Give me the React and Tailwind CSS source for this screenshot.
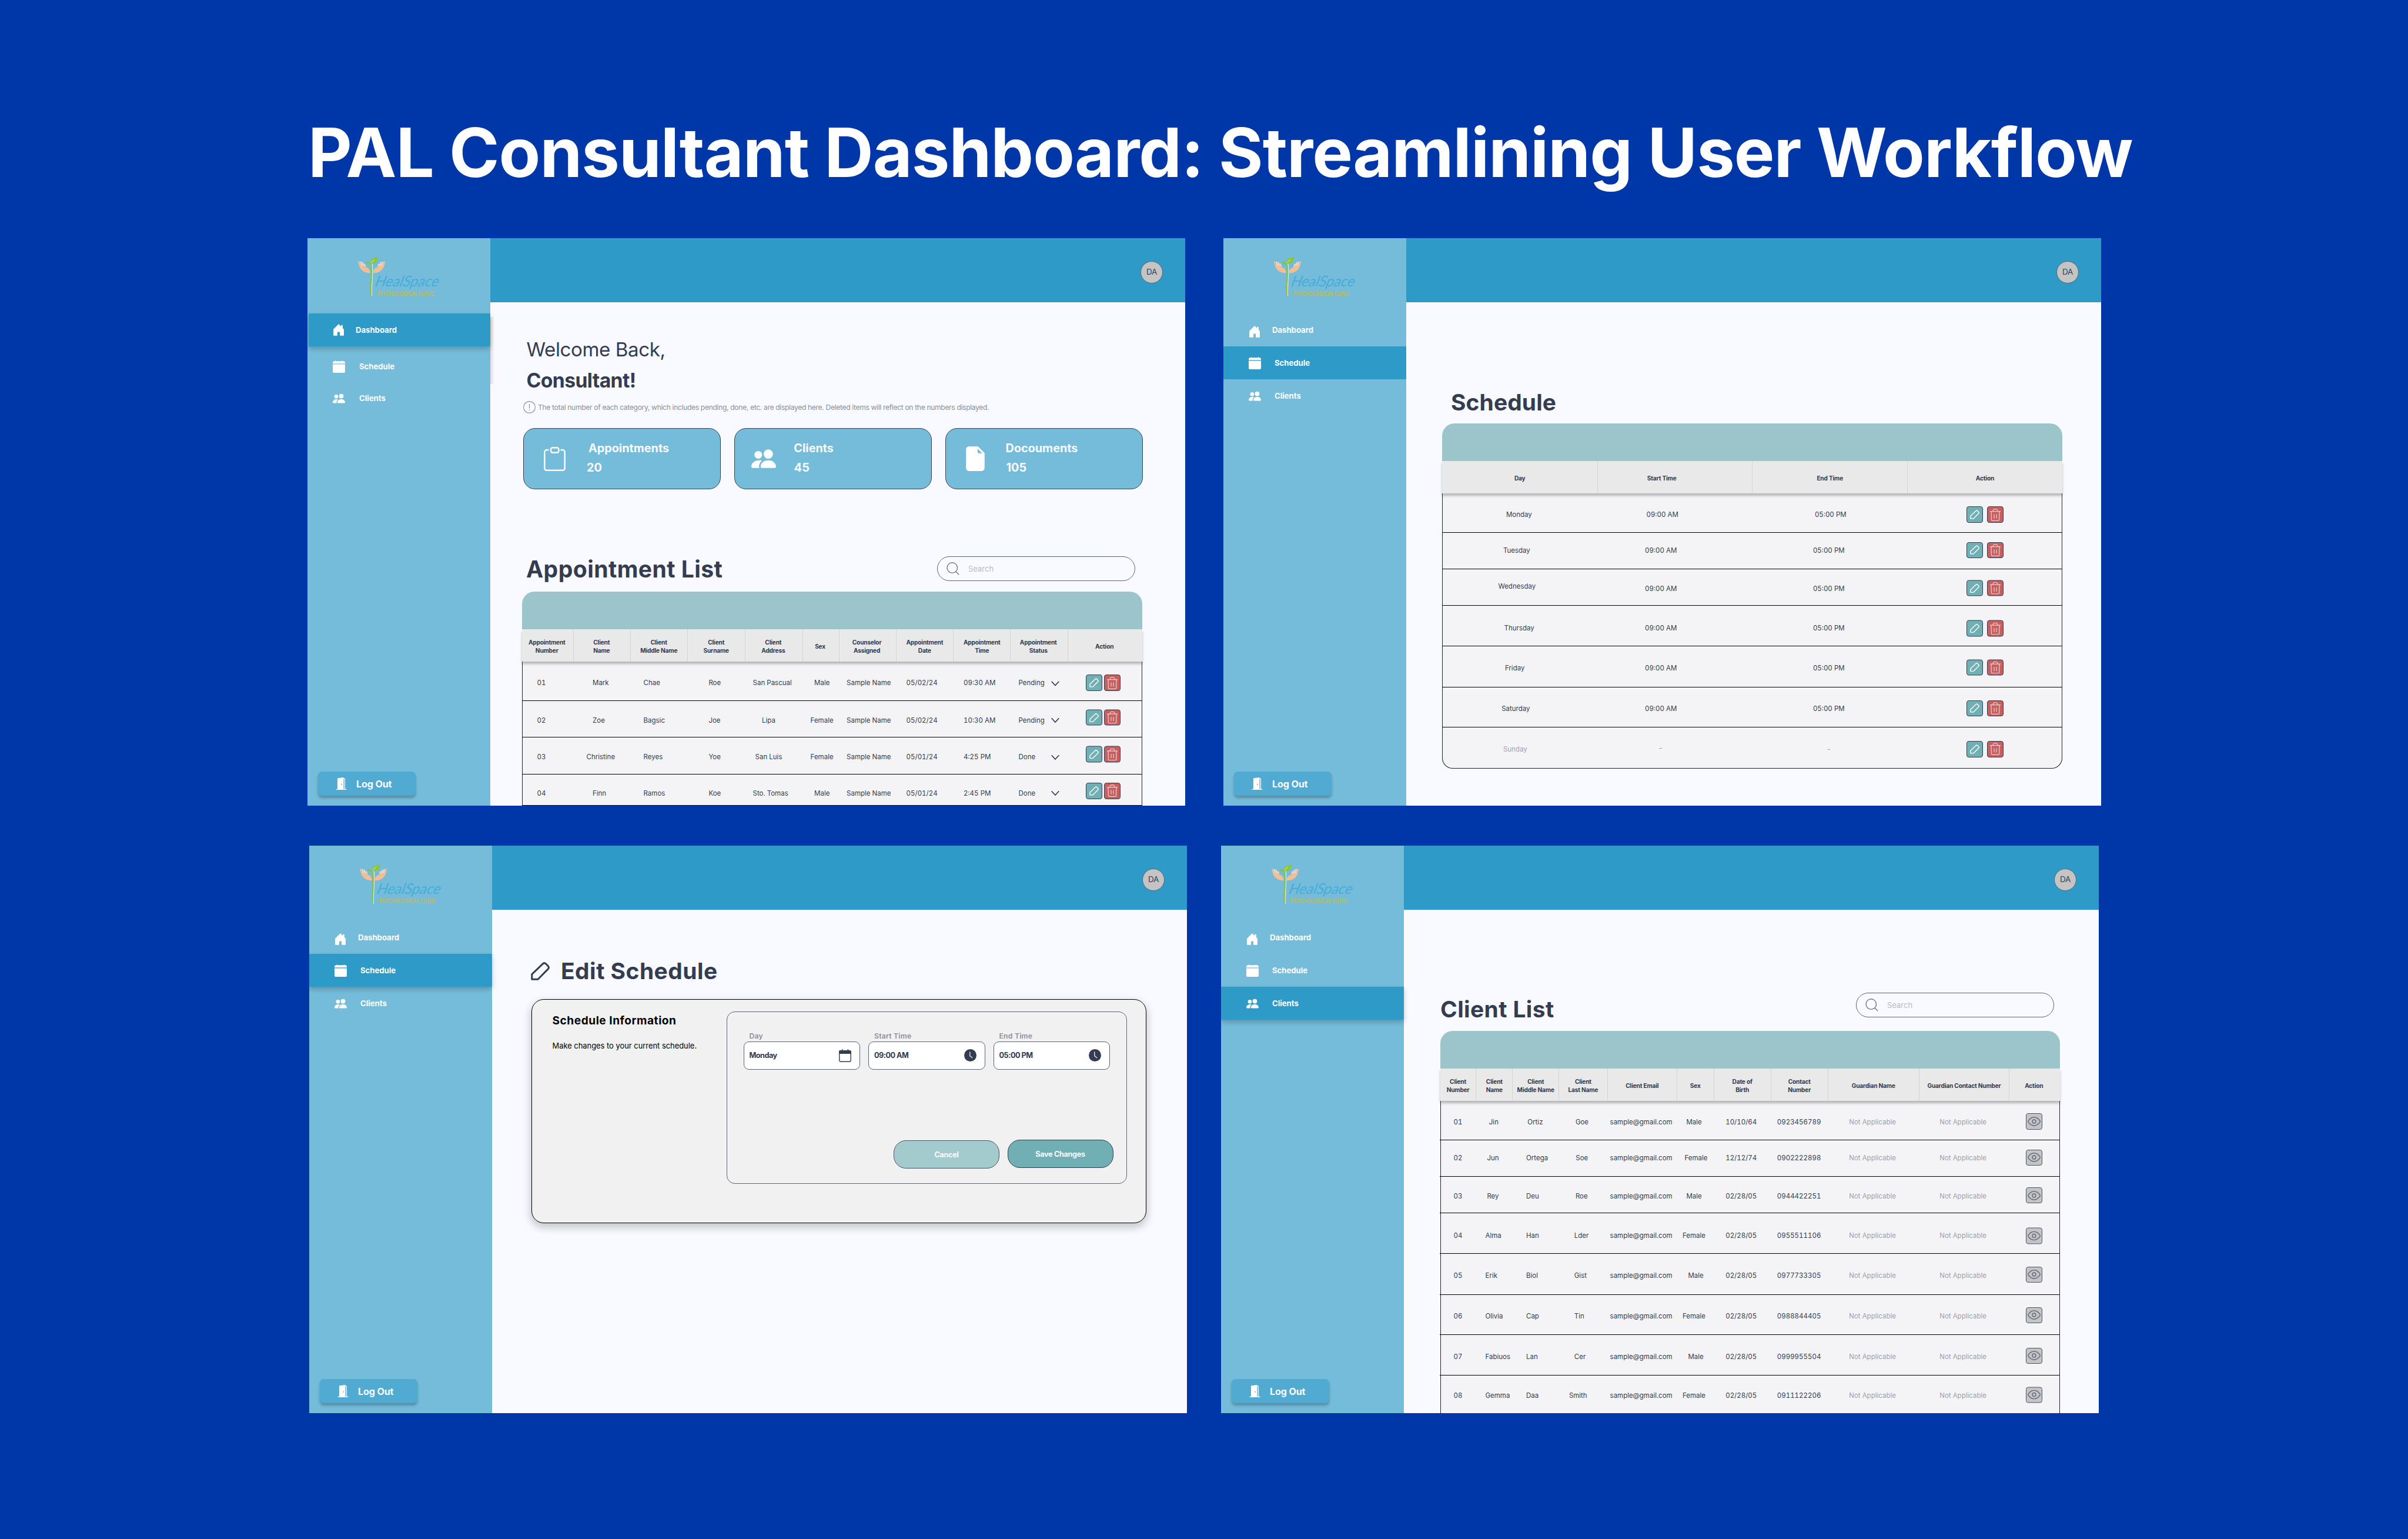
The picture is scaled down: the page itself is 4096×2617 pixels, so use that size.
import React from 'react';
import {
  BsHouseDoorFill,
  BsCalendarFill,
  BsPeopleFill,
  BsDoorOpenFill,
  BsFileEarmarkFill,
} from 'react-icons/bs';

/* ---------- icons ---------- */

function Logo() {
  return (
    <svg viewBox="0 0 510 246" className="h-[67px] w-[139px] shrink-0 overflow-visible">
      <g fill="#f4bd94">
        <path d="M0 30 C2 24 7 26 9 32 L18 52 L14 34 C17 28 22 32 24 40 L32 56 L28 40 C32 36 36 40 38 48 L44 62 C62 66 76 76 76 100 C46 104 16 84 8 58 Z" />
        <path d="M170 30 C168 24 163 26 161 32 L152 52 L156 34 C153 28 148 32 146 40 L138 56 L142 40 C138 36 134 40 132 48 L126 62 C108 66 94 76 94 100 C124 104 154 84 162 58 Z" />
      </g>
      <g fill="none" stroke="#f7e6d6" strokeWidth="5" strokeLinecap="round">
        <path d="M14 30 L24 52 M26 32 L34 52 M40 44 L46 58" />
        <path d="M156 30 L146 52 M144 32 L136 52 M130 44 L124 58" />
      </g>
      <path d="M88 38 C96 100 82 180 86 244" fill="none" stroke="#efe3cf" strokeWidth="5" />
      <path d="M78 40 C92 100 74 180 80 238" fill="none" stroke="#83c441" strokeWidth="8" />
      <path d="M78 36 C74 12 96 2 125 2 C126 24 116 44 92 42 Q84 42 78 36 Z" fill="#8ac63f" />
      <path d="M50 33 Q64 24 74 34 Q70 46 58 46 Q50 42 50 33 Z" fill="#83c441" />
      <path d="M80 34 L102 18" stroke="#e8f2c8" strokeWidth="3" />
      <text
        x="0"
        y="0"
        transform="translate(100 182) skewX(-20)"
        textLength="396"
        lengthAdjust="spacingAndGlyphs"
        fill="#45addb"
        fontFamily="Lato, 'Liberation Sans', sans-serif"
        fontWeight="400"
        fontSize="92"
      >
        HealSpace
      </text>
      <text
        x="120"
        y="242"
        textLength="354"
        lengthAdjust="spacingAndGlyphs"
        fill="#c6b94f"
        fontFamily="Lato, 'Liberation Sans', sans-serif"
        fontWeight="700"
        fontSize="38"
      >
        PSYCHOLOGICAL CLINIC
      </text>
    </svg>
  );
}

function PencilIcon({ className, strokeWidth }) {
  return (
    <svg viewBox="0 0 32 31" className={className} fill="none" stroke="currentColor" strokeWidth={strokeWidth} strokeLinejoin="round">
      <path d="M1.8 29.2 V20.6 L20.6 2.7 Q23 .6 25.4 2.8 L29.4 6.9 Q31.4 9.3 29.4 11.6 L12 29.2 Z" />
    </svg>
  );
}

function TrashIcon() {
  return (
    <svg viewBox="0 0 18 21" className="h-[21px] w-[18px]" fill="none" stroke="#f0cfcf" strokeWidth="1.2">
      <path d="M0 4.7 H18 M4.8 4.7 Q5.2 .7 9 .7 Q12.8 .7 13.2 4.7 M2 4.7 L2.4 18.6 Q2.5 20.3 4.2 20.3 H13.8 Q15.5 20.3 15.6 18.6 L16 4.7 M7 9.6 V16.4 M11 9.6 V16.4" />
    </svg>
  );
}

function SearchIcon() {
  return (
    <svg viewBox="0 0 22 22" className="h-[22px] w-[22px]" fill="none" stroke="#6f7687" strokeWidth="1.4">
      <circle cx="9.8" cy="9.6" r="8.8" />
      <path d="M16 16 L21.2 21.2" />
    </svg>
  );
}

function EyeIcon() {
  return (
    <svg viewBox="0 0 22 16" className="h-[16px] w-[22px]" fill="none" stroke="#636b7c" strokeWidth="1.4">
      <path d="M1 7 Q5.6 .8 11 .8 Q16.4 .8 21 7 Q21.6 8 21 9 Q16.4 15.2 11 15.2 Q5.6 15.2 1 9 Q.4 8 1 7 Z" />
      <circle cx="11" cy="8" r="3" />
    </svg>
  );
}

function ClipboardIcon() {
  return (
    <svg viewBox="0 0 37 41" className="h-[41px] w-[37px]" fill="none" stroke="white" strokeWidth="2.4">
      <path d="M8.5 5 H5.5 Q1.3 5 1.3 9 V35.8 Q1.3 39.8 5.5 39.8 H31.5 Q35.7 39.8 35.7 35.8 V9 Q35.7 5 31.5 5 H28.5" />
      <rect x="12" y="1.3" width="13.4" height="8.4" rx="3" />
    </svg>
  );
}

function InfoIcon() {
  return (
    <svg viewBox="0 0 21 21" className="h-[21px] w-[21px]" fill="none" stroke="#8b8f9d" strokeWidth="1.1">
      <circle cx="10.5" cy="10.5" r="9.9" />
      <path d="M10.5 4.4 V12.6 M10.5 14.6 V16" />
    </svg>
  );
}

function ChevronIcon() {
  return (
    <svg viewBox="0 0 14 9" className="h-[9px] w-[14px]" fill="none" stroke="#333c50" strokeWidth="1.7">
      <path d="M.7 .7 L7 7.6 L13.3 .7" />
    </svg>
  );
}

function DateIcon() {
  return (
    <svg viewBox="0 0 21 22" className="h-[22px] w-[21px]" fill="none" stroke="#333c50" strokeWidth="1.4">
      <rect x=".8" y="2.8" width="19.4" height="18.4" rx="2.2" />
      <path d="M.8 7.4 V5 Q.8 2.8 3 2.8 H18 Q20.2 2.8 20.2 5 V7.4 Z" fill="#333c50" />
      <path d="M5.6 0 V3 M15.4 0 V3" />
    </svg>
  );
}

function ClockIcon() {
  return (
    <svg viewBox="0 0 21 21" className="h-[21px] w-[21px]" fill="none">
      <circle cx="10.5" cy="10.5" r="10.5" fill="#333c50" />
      <path d="M9.8 4.6 V11.6 L14.4 15" stroke="#dfe2ea" strokeWidth="1.4" />
    </svg>
  );
}

/* ---------- shell ---------- */

const NAV_ICONS = {
  Dashboard: <BsHouseDoorFill className="h-[22px] w-[22px]" />,
  Schedule: <BsCalendarFill className="h-[21px] w-[21px]" />,
  Clients: <BsPeopleFill className="h-[21px] w-[21px]" />,
};

function NavItem({ label, active, shadow, className = '', iconClass = '', labelClass }) {
  return (
    <div
      className={`flex h-[56px] shrink-0 items-center pl-[42px] text-white ${active ? 'bg-[#2d9ac8]' : ''} ${
        shadow ? 'relative shadow-[0_4px_8px_rgba(0,0,0,0.22)]' : ''
      } ${className}`}
    >
      <span className={`flex w-[22px] justify-center ${iconClass}`}>{NAV_ICONS[label]}</span>
      <span className={`pt-px text-[13.2px] leading-none font-bold tracking-[-0.003em] ${labelClass}`}>{label}</span>
    </div>
  );
}

function Panel({ active, home, bandShadow, children }) {
  return (
    <section className="relative flex h-[965px] w-[1493px] shrink-0 overflow-hidden bg-[#f9faff]">
      <aside className="flex w-[311px] shrink-0 flex-col bg-[#74bcda]">
        <div className="h-[128px] pt-[32px] pl-[86px]">
          <Logo />
        </div>
        <NavItem
          label="Dashboard"
          active={active === 'Dashboard'}
          shadow={bandShadow && active === 'Dashboard'}
          iconClass={home ? '' : 'translate-y-[3px]'}
          labelClass={home ? 'pl-[18px]' : 'pl-[19px]'}
          className={home ? 'ml-[2px] !pl-[40px]' : ''}
        />
        <NavItem
          label="Schedule"
          active={active === 'Schedule'}
          shadow={bandShadow && active === 'Schedule'}
          labelClass={home ? 'pl-[24px]' : 'pl-[23px]'}
          className={home ? 'mt-[6px]' : ''}
        />
        <NavItem
          label="Clients"
          active={active === 'Clients'}
          shadow={bandShadow && active === 'Clients'}
          labelClass={home ? 'pl-[24px]' : 'pl-[23px]'}
          className={home ? '-mt-[2px]' : ''}
        />
        <button className="mt-auto mb-[17px] ml-[18px] flex h-[41px] w-[166px] items-center rounded-[6.5px] bg-[#50aad2] pl-[28.5px] text-white shadow-[0_4px_4px_rgba(0,0,0,0.25)]">
          <BsDoorOpenFill className="h-[21px] w-[21px]" />
          <span className="pt-[2px] pl-[15.5px] text-[16.1px] leading-none font-bold tracking-[-0.008em]">Log Out</span>
        </button>
      </aside>
      <div className="flex min-w-0 flex-1 flex-col">
        <header className="flex h-[109px] shrink-0 justify-end bg-[#2d9ac8] pt-[39px] pr-[38px]">
          <div className="flex h-[38px] w-[38px] items-center justify-center rounded-full border border-[#5d6675] bg-[#c4c4c4] text-[13.5px] leading-none tracking-[-0.02em] text-[#333c50]">
            DA
          </div>
        </header>
        {children}
      </div>
      {home && (
        <div className="absolute top-[134px] left-[311px] h-[114px] w-[7px] bg-gradient-to-r from-black/12 to-transparent" />
      )}
    </section>
  );
}

function SearchBox({ className = '' }) {
  return (
    <div className={`flex h-[42px] w-[337px] items-center rounded-full border border-[#5c6475] pl-[15px] ${className}`}>
      <SearchIcon />
      <span className="pt-px pl-[15px] text-[13px] leading-none text-[#b7bac5]">Search</span>
    </div>
  );
}

/* ---------- tables ---------- */

function Table({ grid, head, columns, rows, rowHeights, textShift, actionShift, renderAction, rounded, className }) {
  return (
    <div className={`w-[1054.5px] text-[#333c50] ${className}`}>
      <div className="h-[64px] rounded-t-[21px] bg-[#9bc5cb]" />
      <div className={`relative grid h-[55.5px] bg-[#e9e9e9] shadow-[0_4px_4px_rgba(0,0,0,0.25)] ${grid}`}>
        {head.map(([label, cls = ''], i) => (
          <div
            key={i}
            className={`flex items-center justify-center pt-[2px] text-center text-[10.2px] leading-[14px] font-bold tracking-[-0.02em] whitespace-pre ${
              i ? 'border-l border-[#d3d3d3]' : ''
            }`}
          >
            <span className={cls}>{label}</span>
          </div>
        ))}
      </div>
      <div className={`border-x border-[#222] bg-[#f4f4f6] ${rounded ? 'overflow-hidden rounded-b-[18px] border-b' : ''}`}>
        {rows.map((row, r) => (
          <div
            key={r}
            className={`-ml-[1.5px] grid items-center text-[11.5px] leading-none whitespace-nowrap tabular-nums ${grid} ${rowHeights[r]} ${
              rounded && r === rows.length - 1 ? '' : 'border-b border-black'
            }`}
          >
            {row.map((cell, c) => {
              const [text, cls] = Array.isArray(cell) ? cell : [cell, columns[c]];
              return (
                <span key={c} className={`${textShift[r]} ${cls}`}>
                  {text}
                </span>
              );
            })}
            <span className={`flex ${actionShift[r]}`}>{renderAction}</span>
          </div>
        ))}
      </div>
    </div>
  );
}

function EditDelete({ gap }) {
  return (
    <span className={`flex ${gap}`}>
      <span className="flex h-[27.5px] w-[28px] items-center justify-center rounded-[4px] border border-[#333c50] bg-[#70afb4] text-white">
        <PencilIcon className="h-[16px] w-[16px]" strokeWidth="2.8" />
      </span>
      <span className="flex h-[27.5px] w-[28px] items-center justify-center rounded-[4px] border border-[#333c50] bg-[#c65f60]">
        <TrashIcon />
      </span>
    </span>
  );
}

function StatCard({ icon, iconClass, label, labelClass, value, valueClass }) {
  return (
    <div className="flex h-[103.5px] w-[336px] rounded-[20px] border border-[#3a4255] bg-[#74bcda] text-[#f9faff]">
      <div className={`flex items-center text-white ${iconClass}`}>{icon}</div>
      <div className="flex flex-col pt-[24px] text-[19.8px] leading-none font-bold">
        <span className={labelClass}>{label}</span>
        <span className={`pt-[12.5px] ${valueClass}`}>{value}</span>
      </div>
    </div>
  );
}

/* ---------- screens ---------- */

const SN = 'Sample Name';
const drop = (label) => (
  <span className="flex w-[69.5px] items-center justify-between">
    {label}
    <ChevronIcon />
  </span>
);

function DashboardScreen() {
  return (
    <Panel active="Dashboard" home bandShadow>
      <div className="pl-[61.5px] text-[#333c50]">
        <p className="pt-[64px] text-[33.1px] leading-none tracking-[-0.012em]">Welcome Back,</p>
        <p className="pt-[18.5px] text-[33.7px] leading-none font-bold tracking-[-0.0185em]">Consultant!</p>
      </div>
      <div className="mt-[19px] flex h-[21px] items-center pl-[55.5px] text-[#8b8f9d]">
        <InfoIcon />
        <span className="pl-[4.5px] text-[12.1px] leading-none tracking-[-0.0275em] whitespace-nowrap">
          The total number of each category, which includes pending, done, etc. are displayed here. Deleted items will
          reflect on the numbers displayed.
        </span>
      </div>
      <div className="mt-[25px] flex gap-[22.8px] pl-[56px]">
        <StatCard
          icon={<ClipboardIcon />}
          iconClass="w-[109.5px] pl-[33.5px]"
          label="Appointments"
          labelClass="pl-[0.5px]"
          value="20"
          valueClass="-ml-[2.5px]"
        />
        <StatCard
          icon={<BsPeopleFill className="h-[42px] w-[42px]" />}
          iconClass="w-[100.5px] pl-[28.5px]"
          label="Clients"
          value="45"
          valueClass="pl-[0.5px]"
        />
        <StatCard
          icon={<BsFileEarmarkFill className="h-[42px] w-[42px]" />}
          iconClass="w-[102px] pl-[29px]"
          label="Docouments"
          value="105"
          valueClass="pl-[1px]"
        />
      </div>
      <div className="mt-[114.5px] flex items-center pl-[61px]">
        <h2 className="w-[699px] text-[39.1px] leading-none font-bold tracking-[0.011em] text-[#333c50]">
          Appointment List
        </h2>
        <SearchBox />
      </div>
      <Table
        className="mt-[17.5px] ml-[54px]"
        grid="grid-cols-[86.5px_97.5px_97.4px_97.7px_97.5px_62px_97px_97.5px_97.4px_97.5px_126.5px]"
        head={[
          ['Appointment\nNumber', '-ml-[2px]'],
          ['Client\nName', '-ml-[1px]'],
          ['Client\nMiddle Name', '-ml-[1px]'],
          ['Client\nSurname', '-ml-[1px]'],
          ['Client\nAddress', '-ml-[2px]'],
          ['Sex', '-ml-[2px]'],
          ['Counselor\nAssigned', '-ml-[2px]'],
          ['Appointment\nDate'],
          ['Appointment\nTime'],
          ['Appointment\nStatus', '-ml-[3px]'],
          ['Action', '-ml-[2px]'],
        ]}
        columns={[
          'pl-[26px]',
          'pl-[34px]',
          'pl-[23px]',
          'pl-[36.5px]',
          'pl-[14px]',
          'pl-[21px]',
          'pl-[14px]',
          'pl-[18.5px]',
          'pl-[18.5px]',
          'pl-[14.5px]',
        ]}
        rows={[
          ['01', 'Mark', 'Chae', 'Roe', 'San Pascual', 'Male', SN, '05/02/24', '09:30 AM', drop('Pending')],
          ['02', 'Zoe', 'Bagsic', 'Joe', ['Lipa', 'pl-[29.5px]'], ['Female', 'pl-[14.5px]'], SN, '05/02/24', '10:30 AM', drop('Pending')],
          ['03', ['Christine', 'pl-[23.5px]'], 'Reyes', 'Yoe', ['San Luis', 'pl-[18px]'], ['Female', 'pl-[14.5px]'], SN, '05/01/24', '4:25 PM', drop('Done')],
          ['04', 'Finn', 'Ramos', 'Koe', 'Sto. Tomas', 'Male', SN, '05/01/24', '2:45 PM', drop('Done')],
        ]}
        rowHeights={['h-[66.5px]', 'h-[62.5px]', 'h-[62.5px]', 'h-[53px]']}
        textShift={['translate-y-[4px]', 'translate-y-[2.5px]', 'translate-y-[2.5px]', 'translate-y-[6.5px]']}
        actionShift={['pl-[31.5px] translate-y-[3px]', 'pl-[31.5px] -translate-y-[2.5px]', 'pl-[31.5px] -translate-y-[2.5px]', 'pl-[31.5px] translate-y-[2px]']}
        renderAction={<EditDelete gap="gap-[3px]" />}
      />
    </Panel>
  );
}

const BODY_ROWS = [
  'h-[66.5px]',
  'h-[62px]',
  'h-[62.3px]',
  'h-[69px]',
  'h-[69.4px]',
  'h-[68.8px]',
  'h-[69.1px]',
  'h-[69px]',
];

function ScheduleScreen() {
  const nine = '09:00 AM';
  const five = '05:00 PM';
  return (
    <Panel active="Schedule">
      <h2 className="pt-[150.5px] pl-[76px] text-[38.9px] leading-none font-bold tracking-[0.003em] text-[#333c50]">
        Schedule
      </h2>
      <Table
        className="mt-[16.5px] ml-[61.4px]"
        rounded
        grid="grid-cols-[263.6px_263.4px_263.7px_263.8px]"
        head={[['Day'], ['Start Time', '-ml-[45px]'], ['End Time'], ['Action']]}
        columns={['pl-[109px]', 'pl-[81.5px]', 'pl-[104px]']}
        rows={[
          ['Monday', ['09:00 AM', 'pl-[84px]'], ['05:00 PM', 'pl-[107px]']],
          [['Tuesday', 'pl-[104px]'], nine, five],
          [['Wednesday', 'pl-[95.5px] -mt-[8px]'], nine, five],
          [['Thursday', 'pl-[105.7px]'], nine, five],
          [['Friday', 'pl-[107px]'], nine, five],
          [['Saturday', 'pl-[101.3px]'], nine, five],
          [['Sunday', 'pl-[104px] text-[#9da1ac]'], ['-', 'pl-[104.5px] -mt-[5px] text-[#8b8f9d]'], ['-', 'pl-[127px] text-[#8b8f9d]']],
        ]}
        rowHeights={BODY_ROWS}
        textShift={['translate-y-[3.5px]', 'translate-y-0', 'translate-y-[3px]', 'translate-y-[5px]', 'translate-y-[3px]', 'translate-y-[2.5px]', 'translate-y-[3px]']}
        actionShift={[
          'pl-[101px] translate-y-[3px]',
          'pl-[101px] -translate-y-[1px]',
          'pl-[101px] translate-y-[1.5px]',
          'pl-[101px] translate-y-[4.5px]',
          'pl-[101px] translate-y-[1.5px]',
          'pl-[101px] translate-y-[2px]',
          'pl-[101px] translate-y-[2px]',
        ]}
        renderAction={<EditDelete gap="gap-[7px]" />}
      />
    </Panel>
  );
}

function Field({ label, value, icon }) {
  return (
    <label className="flex w-[198.5px] flex-col">
      <span className="pl-[10px] text-[12.2px] leading-none font-semibold tracking-[0.018em] text-[#8b8f9d]">{label}</span>
      <span className="mt-[2.6px] flex h-[47.5px] items-center justify-between rounded-[9px] border border-[#5c6475] bg-white pr-[14px] pl-[9px] text-[12.7px] leading-none font-bold tracking-[-0.04em] text-[#333c50]">
        <span className="pt-[2px]">{value}</span>
        {icon}
      </span>
    </label>
  );
}

function EditScheduleScreen() {
  return (
    <Panel active="Schedule" bandShadow>
      <div className="flex items-center pt-[85px] pl-[66px] text-[#333c50]">
        <PencilIcon className="h-[31px] w-[32px]" strokeWidth="3" />
        <h2 className="pl-[19px] text-[38.9px] leading-none font-bold tracking-[0.0125em]">Edit Schedule</h2>
      </div>
      <div className="mt-[27.8px] ml-[66.5px] flex h-[381px] w-[1046px] rounded-[21px] border border-black bg-[#f1f1f1] shadow-[0_6px_14px_2px_rgba(0,0,0,0.2)]">
        <div className="w-[331px] pl-[35px] text-black">
          <h3 className="pt-[26px] text-[19.1px] leading-none font-bold tracking-[0.028em]">Schedule Information</h3>
          <p className="pt-[28px] text-[12.9px] leading-none whitespace-nowrap">Make changes to your current schedule.</p>
        </div>
        <div className="mt-[20.5px] flex h-[292.5px] w-[681px] flex-col rounded-[14px] border border-[#5c6475] pt-[35px] pl-[28px]">
          <div className="flex gap-[14px]">
            <Field label="Day" value="Monday" icon={<DateIcon />} />
            <Field label="Start Time" value="09:00 AM" icon={<ClockIcon />} />
            <Field label="End Time" value="05:00 PM" icon={<ClockIcon />} />
          </div>
          <div className="mt-[119.5px] flex gap-[13.5px] pl-[255.5px] text-[12.7px] leading-none font-bold tracking-[-0.027em] text-[#f9faff]">
            <button className="mt-[1px] h-[47.5px] w-[180px] rounded-[21px] border border-[#4c5568] bg-[#a3cacd] pt-[3px]">
              Cancel
            </button>
            <button className="h-[47.5px] w-[180px] rounded-[21px] border border-[#333c50] bg-[#70afb4] pt-[3px]">
              Save Changes
            </button>
          </div>
        </div>
      </div>
    </Panel>
  );
}

function ClientScreen() {
  const mail = 'sample@gmail.com';
  const na = 'Not Applicable';
  const late = (num, name, mid, last, sex, contact) => [
    num,
    [name, 'pl-[16.7px]'],
    mid,
    last,
    mail,
    sex,
    '02/28/05',
    contact,
    na,
    na,
  ];
  const female = ['Female', 'pl-[10.5px]'];
  const male = ['Male', 'pl-[20px]'];
  return (
    <Panel active="Clients" bandShadow>
      <div className="flex pt-[141px] pl-[62px]">
        <h2 className="w-[707px] pt-[9px] text-[38.9px] leading-none font-bold tracking-[0.01em] text-[#333c50]">
          Client List
        </h2>
        <SearchBox />
      </div>
      <Table
        className="mt-[17px] ml-[61.8px]"
        grid="grid-cols-[60.5px_62.1px_78.6px_82.8px_118.1px_62.8px_97px_97.1px_155px_153.5px_87px]"
        head={[
          ['Client\nNumber'],
          ['Client\nName'],
          ['Client\nMiddle Name'],
          ['Client\nLast Name'],
          ['Client Email'],
          ['Sex'],
          ['Date of\nBirth'],
          ['Contact\nNumber'],
          ['Guardian Name'],
          ['Guardian Contact Number'],
          ['Action', '-ml-[3px]'],
        ]}
        columns={[
          'pl-[23.3px]',
          'pl-[19.6px]',
          'pl-[24.1px]',
          'pl-[27.3px]',
          'pl-[5.3px]',
          'pl-[17px]',
          'pl-[21px]',
          'pl-[11.6px]',
          'pl-[37px] text-[#9da1ac]',
          'pl-[36px] text-[#9da1ac]',
        ]}
        rows={[
          ['01', ['Jin', 'pl-[23px]'], ['Ortiz', 'pl-[26.4px]'], ['Goe', 'pl-[29.4px]'], mail, 'Male', '10/10/64', '0923456789', na, na],
          ['02', 'Jun', 'Ortega', ['Soe', 'pl-[29.8px]'], mail, ['Female', 'pl-[14px]'], '12/12/74', '0902222898', na, na],
          ['03', 'Rey', 'Deu', ['Roe', 'pl-[29.4px]'], mail, 'Male', '02/28/05', '0944422251', na, na],
          late('04', 'Alma', 'Han', 'Lder', female, '0955511106'),
          late('05', 'Erik', 'Biol', 'Gist', male, '0977733305'),
          late('06', 'Olivia', 'Cap', 'Tin', female, '0988844405'),
          late('07', 'Fabiuos', 'Lan', 'Cer', male, '0999955504'),
          late('08', 'Gemma', 'Daa', ['Smith', 'pl-[18.4px]'], female, '0911122206'),
        ]}
        rowHeights={BODY_ROWS}
        textShift={['translate-y-[3.5px]', 'translate-y-0', 'translate-y-[3px]', 'translate-y-[5px]', 'translate-y-[2.5px]', 'translate-y-[2.5px]', 'translate-y-[2.5px]', 'translate-y-0']}
        actionShift={[
          'pl-[29.5px] translate-y-[2px]',
          'pl-[29.5px] -translate-y-[1px]',
          'pl-[29.5px] translate-y-[1px]',
          'pl-[29.5px] translate-y-[4.5px]',
          'pl-[29.5px] translate-y-[1px]',
          'pl-[29.5px] translate-y-[1px]',
          'pl-[29.5px] translate-y-[1px]',
          'pl-[29.5px] -translate-y-[1.5px]',
        ]}
        renderAction={
          <span className="flex h-[27.5px] w-[28px] items-center justify-center rounded-[4px] border border-[#4c5568] bg-[#c4c4c4]">
            <EyeIcon />
          </span>
        }
      />
    </Panel>
  );
}

export default function App() {
  return (
    <main className="flex h-[2617px] w-[4096px] flex-col overflow-hidden bg-[#0037a8] font-['Inter',sans-serif]">
      <h1 className="h-[405px] shrink-0 pt-[202px] pl-[524px] text-[115.5px] leading-none font-bold tracking-[-0.0087em] whitespace-nowrap text-white">
        PAL Consultant Dashboard: Streamlining User Workflow
      </h1>
      <div className="flex gap-[65px] pl-[523px]">
        <DashboardScreen />
        <ScheduleScreen />
      </div>
      <div className="mt-[68px] flex gap-[58px] pl-[526px]">
        <EditScheduleScreen />
        <ClientScreen />
      </div>
    </main>
  );
}
